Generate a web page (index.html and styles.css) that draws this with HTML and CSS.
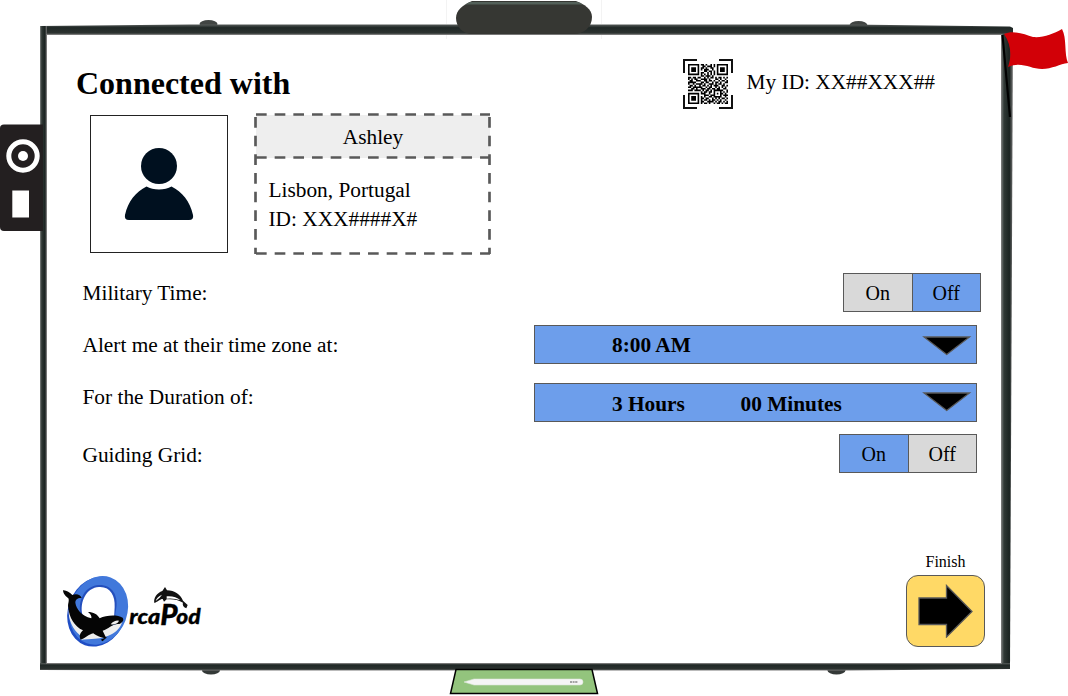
FILE: index.html
```html
<!DOCTYPE html>
<html lang="en">
<head>
<meta charset="utf-8">
<title>OrcaPod</title>
<link rel="stylesheet" href="styles.css">
</head>
<body>
<div class="stage">
  <svg class="device" viewBox="0 0 1068 696" aria-hidden="true">
    <defs>
      <linearGradient id="bar" x1="0" y1="0" x2="0" y2="1"><stop offset="0" stop-color="#565b59"/><stop offset=".3" stop-color="#202826"/><stop offset=".8" stop-color="#2c3230"/><stop offset="1" stop-color="#777"/></linearGradient>
      <linearGradient id="side" x1="0" y1="0" x2="1" y2="0"><stop offset="0" stop-color="#808482"/><stop offset=".25" stop-color="#303835"/><stop offset=".7" stop-color="#1b2321"/><stop offset="1" stop-color="#777"/></linearGradient>
    </defs>
    <ellipse cx="208.500" cy="24" rx="9" ry="4" fill="#414543"/>
    <ellipse cx="858.500" cy="25.500" rx="9" ry="4.500" fill="#414543"/>
    <ellipse cx="211" cy="670.500" rx="9" ry="4" fill="#343937"/>
    <ellipse cx="836.500" cy="670.500" rx="9" ry="4" fill="#343937"/>
    <path d="M40 26 190 24.500H850L1010 26.500 1013 28V35H40Z" fill="url(#bar)"/>
    <path d="M40 26H47V670H40Z" fill="url(#side)"/>
    <path d="M1001 34H1013L1010 669H1001Z" fill="url(#side)"/>
    <path d="M40 663H1010V669L850 670.500H190L40 670Z" fill="url(#bar)"/>
    <path d="M46.500 34.500H1001.500V663.500H46.500Z" fill="#fff" stroke="#777"/>
    <path d="M446.500 0V24M446.500 35V39M601.500 0V24M601.500 35V39" stroke="#f3f3f3" fill="none"/>
    <path d="M472 1H576C584 4 592 9 592 17C592 27 584 34 574 34H472C463 34 456 27 456 18C456 10 463 5 472 1Z" fill="#363733"/>
    <path d="M470 2H578L583 4.500H465Z" fill="#536059"/>
    <path d="M4 124.500H43V231H4Q0 231 0 227V128Q0 124.500 4 124.500Z" fill="#231f20"/>
    <circle cx="23" cy="156" r="14.200" fill="none" stroke="#fff" stroke-width="5"/>
    <circle cx="23" cy="156" r="5" fill="#fff"/>
    <path d="M12.300 190.500H29V217.500H12.300Z" fill="#fff"/>
    <path d="M1002.500 35 1010 117" stroke="#000" stroke-width="2.200"/>
    <path d="M1004 34C1013 30 1024 34 1033 37C1043 38 1053 34 1062 29C1067 38 1064 54 1068 63C1060 64 1052 69 1042 69C1030 69 1022 61 1008 67C1012 56 1011 44 1004 34Z" fill="#d20007"/>
    <path d="M456 669.500H592L597.500 693.500H450.500Z" fill="#93c47d" stroke="#000" stroke-width="1.500"/>
    <path d="M464 682 474 679H580Q583 679 583 682Q583 685 580 685H474Z" fill="#f5f5f5" stroke="#dce5d8" stroke-width=".6"/>
    <path d="M570 682H578" stroke="#888" stroke-width="1.300" stroke-dasharray="2 .6"/>
  </svg>

  <main class="screen">
    <header class="top">
      <h1 class="title">Connected with</h1>
      <div class="my-id">
        <svg class="qr" viewBox="0 0 50 50">
          <path class="qr-corners" d="M1 14V1H14M36 1H49V14M1 36V49H14M36 49H49V36"/>
          <path id="modules" transform="translate(5 5) scale(1.6)"/>
        </svg>
        <span>My ID: XX##XXX##</span>
      </div>
    </header>

    <section class="contact">
      <div class="avatar">
        <svg width="70" height="74" viewBox="0 0 70 74"><circle cx="35" cy="19" r="18" fill="#00101f"/><path d="M22.500 39.500C29 43.500 41 43.500 47.500 39.500C58 45 66 54 69 68Q70 73 65 73H5Q0 73 1 68C4 54 12 45 22.500 39.500Z" fill="#00101f"/></svg>
      </div>
      <div class="card">
        <svg class="dashes" viewBox="0 0 238 143"><path d="M2 1.500H236M2 44.500H236M2 140.500H236M1.500 4V141M235.500 4V141"/></svg>
        <div class="card-name">Ashley</div>
        <div class="card-info">Lisbon, Portugal<br>ID: XXX####X#</div>
      </div>
    </section>

    <section class="settings">
      <div class="row row-military"><span class="label">Military Time:</span><div class="toggle"><span>On</span><span class="on">Off</span></div></div>
      <div class="row row-alert"><span class="label">Alert me at their time zone at:</span><div class="select"><b>8:00 AM</b><svg class="caret" viewBox="0 0 50 22"><path d="M2 2H47.500L24.700 19.500Z"/></svg></div></div>
      <div class="row row-duration"><span class="label">For the Duration of:</span><div class="select"><b class="hours">3 Hours</b><b>00 Minutes</b><svg class="caret caret-high" viewBox="0 0 50 22"><path d="M2 2H47.500L24.700 19.500Z"/></svg></div></div>
      <div class="row row-grid"><span class="label">Guiding Grid:</span><div class="toggle"><span class="on">On</span><span>Off</span></div></div>
    </section>

    <footer class="bottom">
      <svg class="logo" viewBox="0 0 510 270">
        <ellipse cx="141" cy="140" rx="87" ry="107" transform="rotate(20 141 140)" fill="#1f4dc4"/>
        <ellipse cx="146" cy="136" rx="86" ry="105" transform="rotate(20 146 136)" fill="#4178db"/>
        <path d="M91 145C83 103 106 62 147 60C186 59 204 90 199 128L194 160H98Z" fill="#244fbd"/>
        <path d="M97 148C89 110 109 68 147 66C181 64 196 92 194 126L192 162H102Z" fill="#fff"/>
        <path d="M56 134C55 165 67 190 90 211L112 190C84 173 68 155 56 134Z" fill="#eee"/>
        <path d="M112 198C145 188 185 186 216 170C212 197 175 219 135 221L92 224Z" fill="#eee"/>
        <path d="M39 76C48 75 60 82 67 90C78 85 92 88 95 99C83 98 76 104 76 113C79 133 94 151 124 160C126 154 121 146 114 141C130 141 143 148 149 160C168 151 200 148 218 158C223 165 217 173 208 177C188 174 176 192 158 197L169 220C151 218 137 211 130 205C116 208 106 220 92 224C86 213 91 203 99 196C73 184 58 158 55 128C52 118 59 108 55 100C48 94 40 88 39 76Z" fill="#050505"/>
        <path d="M182 178Q193 165 207 167Q201 180 182 178Z" fill="#eee"/>
        <path d="M152 224 172 215 158 229Z" fill="#050505"/>
        <path d="M313 114C310 98 321 84 337 78L345 66 351 76C374 76 392 89 399 107L413 120 409 130C399 126 397 119 399 113C385 104 366 101 350 103L342 110 338 102C330 102 324 110 313 114Z" fill="#111"/>
        <path d="M317 108Q320 96 336 89L329 98ZM350 94Q376 92 391 106Q374 99 350 101Z" fill="#fff"/>
        <text class="logo-text" x="238" y="178" textLength="93" lengthAdjust="spacingAndGlyphs">rca</text>
        <text class="logo-text logo-p" x="331" y="180" textLength="52" lengthAdjust="spacingAndGlyphs">P</text>
        <text class="logo-text" x="379" y="177" textLength="73" lengthAdjust="spacingAndGlyphs">od</text>
      </svg>
      <div class="finish">
        <span>Finish</span>
        <button class="finish-button" aria-label="Finish"><svg width="56" height="54" viewBox="0 0 56 54"><path d="M1 14H28.500V1.500L54 27.500 28.500 53V40.500H1Z"/></svg></button>
      </div>
    </footer>
  </main>
</div>
<script src="qr.js"></script>
</body>
</html>
```
FILE: styles.css
```css
* { box-sizing: border-box; }
body { margin: 0; background: #fff; font-family: "Liberation Serif", "Times New Roman", serif; font-size: 21.33px; color: #000; }
.stage { position: relative; display: flow-root; width: 1068px; height: 696px; overflow: hidden; }
.device { position: absolute; inset: 0; width: 1068px; height: 696px; }
.screen { position: relative; display: flex; flex-direction: column; width: 955px; height: 629px; margin: 34px 0 0 47px; }
.top { display: flex; justify-content: space-between; align-items: flex-start; height: 79px; padding: 25px 67px 0 29px; }
.title { margin: 6px 0 0; font-size: 32px; line-height: 37px; }
.my-id { display: flex; align-items: center; gap: 14px; line-height: 24px; height: 50px; }
.my-id span { padding-bottom: 4px; }
.qr { width: 50px; height: 50px; }
.qr-corners { fill: none; stroke: #111; stroke-width: 2; }
.contact { display: flex; gap: 26px; height: 143px; padding-left: 43px; }
.avatar { display: flex; justify-content: center; align-items: center; width: 138px; height: 138px; margin-top: 2px; border: 1.500px solid #222; }
.card { position: relative; width: 238px; height: 143px; }
.dashes { position: absolute; inset: 0; width: 238px; height: 143px; fill: none; stroke: #595959; stroke-width: 2.67; stroke-dasharray: 10.67 8; }
.card-name { height: 43px; margin: 2px 2px 0 2px; line-height: 44px; text-align: center; background: #eee; }
.card-info { padding: 18px 0 0 14.5px; line-height: 29px; }
.settings { height: 214px; padding: 17px 21px 0 35px; }
.row { display: flex; justify-content: space-between; align-items: center; height: 39px; }
.label { padding: 2px 0 0 0.5px; }
.row-alert { margin-top: 13px; padding-right: 4px; }
.row-duration { margin-top: 19px; padding-right: 4px; }
.row-duration .label { padding: 0 0 11px 0.5px; }
.row-grid { margin-top: 12px; padding-right: 4px; }
.row-grid .label { padding-top: 4px; }
.toggle { display: flex; width: 138px; height: 39px; border: 1.500px solid #595959; font-size: 20px; }
.toggle span { flex: 1; line-height: 38px; text-align: center; background: #d9d9d9; }
.toggle span + span { border-left: 1px solid #595959; }
.toggle .on { background: #6d9eeb; }
.select { display: flex; align-items: center; width: 443px; height: 39px; padding-left: 77px; border: 1.500px solid #595959; background: #6d9eeb; }
.select b { padding-top: 2px; }
.row-duration b { padding-top: 4px; }
.hours { width: 128.5px; }
.caret { width: 50px; height: 22px; margin: 2px 4px 0 auto; }
.caret-high { margin-top: -1px; }
.caret path, .finish-button path { fill: #000; stroke: #595959; stroke-width: 1.300; }
.bottom { display: flex; flex: 1; justify-content: space-between; align-items: flex-end; padding: 0 17px 8px 3px; }
.logo { width: 170px; height: 90px; }
.logo-text { font: italic 900 62px Lato, sans-serif; stroke: #000; stroke-width: 1; }
.logo-p { font-size: 88px; }
.finish { display: flex; flex-direction: column; align-items: center; gap: 5px; margin-bottom: 8px; font-size: 16px; line-height: 18px; }
.finish span { padding-top: 1px; margin-bottom: -1px; }
.finish-button { display: flex; align-items: center; justify-content: center; width: 79px; height: 72px; padding: 0; border: 1.500px solid #595959; border-radius: 12px; background: #ffd966; }
```
FILE: qr.js
```js
// Each string is one row of QR modules.
const rows = [
  "1111111011010010101111111",
  "1000001001101110101000001",
  "1011101011010011001011101",
  "1011101010111001001011101",
  "1011101000110110101011101",
  "1000001011001010101000001",
  "1111111010101010101111111",
  "0000000011011101000000000",
  "1101101100101011010110101",
  "1010110011110100011010010",
  "0110011100110110100101101",
  "1111100011011001011010011",
  "1001011110100111010110100",
  "0110100101101010111001101",
  "1101111110010110010101010",
  "0011010011101101101100110",
  "1110111101011010111111001",
  "0000000010110110100010101",
  "1111111011100100101011010",
  "1000001000111011100010111",
  "1011101010100110111110010",
  "1011101011011001010101101",
  "1011101010110101101010010",
  "1000001011001111010110101",
  "1111111010110100101101011"
];
const parts = [];
rows.forEach((row, y) => [...row].forEach((bit, x) => {
  if (bit === "1") parts.push(`M${x} ${y}h1v1h-1z`);
}));
document.getElementById("modules").setAttribute("d", parts.join(""));
```
